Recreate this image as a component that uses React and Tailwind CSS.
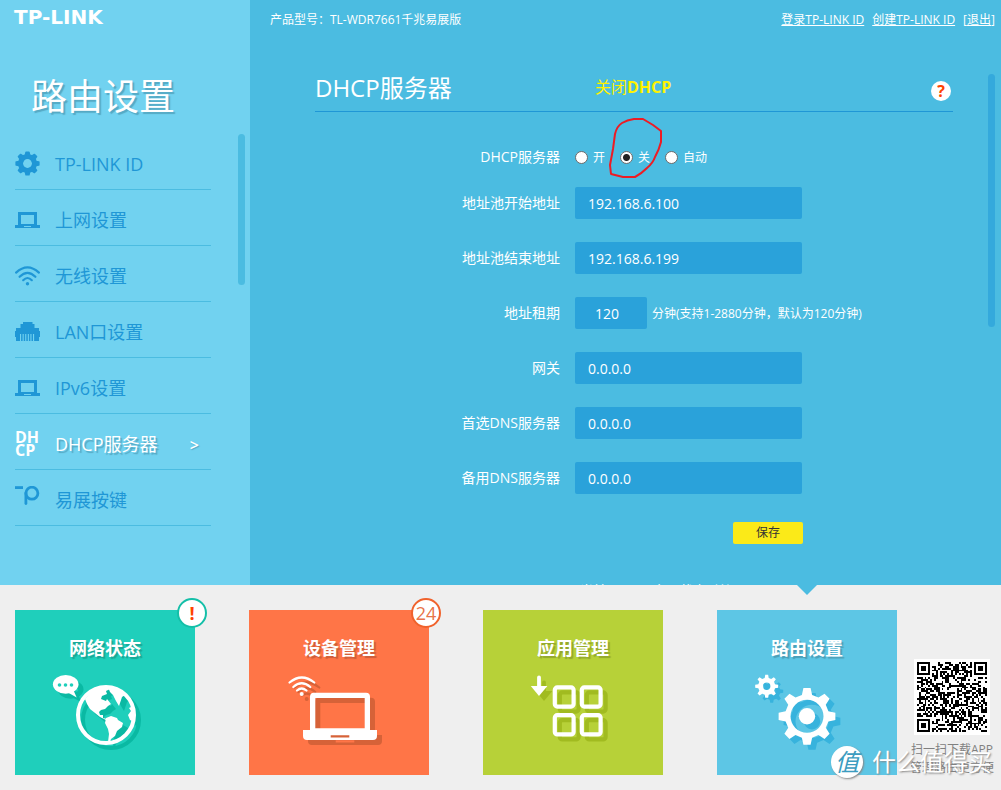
import { useState } from "react";

// outline of a cog with square-ish teeth
const gearPath = (cx, cy, outer, root, teeth = 8) => {
    const step = (Math.PI * 2) / teeth;
    const pts = [];
    for (let i = 0; i < teeth; i++) {
        const a = i * step - Math.PI / 2;
        [[-0.3, root], [-0.16, outer], [0.16, outer], [0.3, root]].forEach(([k, r]) => {
            pts.push(`${(cx + r * Math.cos(a + k * step)).toFixed(2)} ${(cy + r * Math.sin(a + k * step)).toFixed(2)}`);
        });
    }
    return `M${pts.join("L")}Z`;
};

const circlePath = (cx, cy, r) =>
    `M${cx - r} ${cy}a${r} ${r} 0 1 0 ${2 * r} 0a${r} ${r} 0 1 0 ${-2 * r} 0Z`;

const GearIcon = () => (
    <svg viewBox="0 0 25 25" className="w-[25px] h-[25px]" fill="currentColor">
        <path
            d={gearPath(12.5, 12.5, 11.4, 8.8) + circlePath(12.5, 12.5, 4.5)}
            fillRule="evenodd"
            stroke="currentColor"
            strokeWidth="1.6"
            strokeLinejoin="round"
        />
        <circle cx="12.5" cy="12.5" r="4.4" fill="#71d2f0" />
    </svg>
);

const LaptopIcon = () => (
    <svg viewBox="0 0 25 16" className="w-[25px] h-[16px]" fill="currentColor">
        <path fillRule="evenodd" d="M3 0H22V13H3ZM6 3H19V12H6Z" />
        <path fillRule="evenodd" d="M0 13H25V16H0ZM9 14H16V15H9Z" />
    </svg>
);

const WifiIcon = () => (
    <svg viewBox="0 0 25 20" className="w-[25px] h-[20px]" fill="none" stroke="currentColor" strokeWidth="2.2" strokeLinecap="round">
        <path d="M1.1 6.6Q12.5 -3.8 23.9 6.6" />
        <path d="M4.6 10.8Q12.5 3 20.4 10.8" />
        <path d="M8.2 14.2Q12.5 9.8 16.8 14.2" />
        <circle cx="12.5" cy="17.8" r="1.7" fill="currentColor" stroke="none" />
    </svg>
);

const LanIcon = () => (
    <svg viewBox="0 0 25 19" className="w-[25px] h-[19px]">
        <path fill="currentColor" d="M8 0H17.5V2H19.5V6H24V9H25V15H24V19H1V15H0V9H1V6H5.5V2H8Z" />
        {[5, 7.6, 10.2, 12.8, 15.4, 18].map((x) => (
            <rect key={x} x={x} y="12" width="1.1" height="7" fill="#71d2f0" />
        ))}
    </svg>
);

const DhcpIcon = () => (
    <span className="flex flex-col w-[25px] text-base leading-[13px] font-bold" aria-hidden="true">
        <span>DH</span>
        <span>CP</span>
    </span>
);

const KeyIcon = () => (
    <svg viewBox="0 0 25 27" className="w-[25px] h-[27px]" fill="none" stroke="currentColor" strokeWidth="2.8" strokeLinecap="round">
        <path d="M0 1.6H8" strokeLinecap="butt" />
        <path d="M10.9 17.5V7" />
        <circle cx="16.9" cy="7.2" r="6" />
    </svg>
);

// white drawing with its flat shadow behind it
const Shadowed = ({ color, children }) => (
    <svg viewBox="0 0 180 90" className="w-[180px] h-[90px] mt-2">
        <g transform="translate(5 5)" color={color}>{children}</g>
        <g color="#ffffff">{children}</g>
    </svg>
);

const GlobeArt = () => (
    <Shadowed color="#0ab9a3">
        <g fill="currentColor">
            <ellipse cx="50.7" cy="14.3" rx="12.8" ry="9.4" />
            <path d="M52 22L61.7 27.4L57.5 18Z" />
            <circle cx="91" cy="45" r="28" fill="none" stroke="currentColor" strokeWidth="4" />
            <path d="M70 29L76 22L84 18L92 17L95 19L91 21L92 24L87 26L86 29L91 31L92 29L96 34L93 36L90 39L86 40L84 42L85 45L88 45L88 48L92 49L91 50L85 47L80 43L75 39L72 34Z" />
            <path d="M93 17L104 19L110 25L107 27L104 36L101 31L98 25L95 22Z" />
            <path d="M91 48L96 46L102 48L103 50L108 53L107 57L102 61L100 66L96 69L95 72L93 72L94 64L93 59L90 53Z" />
            <path d="M118 36L114 38L116 41L113 45L115 50L119 52Z" />
        </g>
        <g fill="#1fcfbb">
            <circle cx="44.5" cy="15" r="1.8" />
            <circle cx="50.5" cy="15" r="1.8" />
            <circle cx="56.5" cy="15" r="1.8" />
        </g>
    </Shadowed>
);

const DevicesArt = () => (
    <Shadowed color="#d66238">
        <g fill="currentColor">
            <path fillRule="evenodd" d="M65 22.7H117Q121 22.7 121 26.7V60H61V26.7Q61 22.7 65 22.7ZM66.3 28V58.3H115.7V28Z" />
            <path fillRule="evenodd" d="M54 60H128V66Q128 70 124 70H58Q54 70 54 66ZM81.7 65.2V67.4H100.3V65.2Z" />
            <circle cx="52.7" cy="24" r="2" />
        </g>
        <g fill="none" stroke="currentColor" strokeWidth="2.2" strokeLinecap="round">
            <path d="M40.5 12.5Q52.7 2.5 65.3 12.5" />
            <path d="M44.3 17Q52.7 9.5 61.3 17" />
            <path d="M48 20.5Q52.7 16.5 57.5 20.5" />
        </g>
    </Shadowed>
);

const AppsArt = () => (
    <Shadowed color="#a1bb20">
        <g fill="none" stroke="currentColor" strokeWidth="4.2">
            <rect x="71.8" y="17.4" width="18.8" height="19.2" rx="2.5" />
            <rect x="98.8" y="17.4" width="18.8" height="19.2" rx="2.5" />
            <rect x="71.8" y="45.2" width="18.8" height="19.2" rx="2.5" />
            <rect x="98.8" y="45.2" width="18.8" height="19.2" rx="2.5" />
            <path d="M56 7.4V18" strokeLinecap="round" strokeWidth="3.8" />
        </g>
        <path fill="currentColor" d="M47.8 16H64.4L56 26Z" />
    </Shadowed>
);

const GearsArt = () => (
    <Shadowed color="#37b3dd">
        <g fill="currentColor" fillRule="evenodd">
            <path d={gearPath(49.7, 16.3, 11.6, 8.6) + circlePath(49.7, 16.3, 3.7)} />
            <path d={gearPath(90, 46.3, 28.6, 22) + circlePath(90, 46.3, 16.5)} />
            <circle cx="90" cy="46.3" r="8.2" />
        </g>
    </Shadowed>
);

// 37 x 37 code: three finders, one alignment mark, filler modules
const QrCode = () => {
    const n = 37;
    const finder = (x, y, fx, fy) => {
        const d = Math.max(Math.abs(x - fx), Math.abs(y - fy));
        return d > 4 ? null : d !== 2 && d !== 4;
    };
    let seed = 7661;
    let d = "";
    for (let y = 0; y < n; y++) {
        for (let x = 0; x < n; x++) {
            seed = (seed * 1103515245 + 12345) % 2147483648;
            let on = (seed >> 12) % 100 < 52;
            if (x === 6 || y === 6) on = (x + y) % 2 === 0;
            const a = Math.max(Math.abs(x - 30), Math.abs(y - 30));
            if (a <= 2) on = a !== 1;
            [[3, 3], [33, 3], [3, 33]].forEach(([fx, fy]) => {
                const f = finder(x, y, fx, fy);
                if (f !== null) on = f;
            });
            if (on) d += `M${x} ${y}h1v1h-1z`;
        }
    }
    return (
        <svg viewBox="0 0 37 37" className="w-[70px] h-[70px]" shapeRendering="crispEdges" role="img">
            <path d={d} fill="#000" />
        </svg>
    );
};

const menu = [
    { name: "TP-LINK ID", icon: <GearIcon /> },
    { name: "上网设置", icon: <LaptopIcon /> },
    { name: "无线设置", icon: <WifiIcon /> },
    { name: "LAN口设置", icon: <LanIcon /> },
    { name: "IPv6设置", icon: <LaptopIcon /> },
    { name: "DHCP服务器", icon: <DhcpIcon />, active: true },
    { name: "易展按键", icon: <KeyIcon /> },
];

const SideBar = () => {
    return (
        <aside className="flex flex-col w-[250px] shrink-0 bg-[#71d2f0]">
            <div className="h-[134px] shrink-0">
                <a href="#" className="block pl-[14px] pt-[5px] text-white font-bold text-xl leading-6 font-['DejaVu_Sans']">
                    TP-LINK
                </a>
                <h1 className="pl-[31px] pt-[38px] text-[36px] leading-[60px] text-white [text-shadow:2px_2px_1px_#55a9c4]">路由设置</h1>
            </div>
            <div className="flex justify-between pl-[15px] pr-[5px]">
                <nav className="w-[196px]">
                    {menu.map((m) => (
                        <a
                            key={m.name}
                            href="#"
                            className={
                                m.active
                                    ? "flex items-center gap-[15px] h-14 pt-1 border-b border-[#4bbce1] text-white"
                                    : "flex items-center gap-[15px] h-14 pt-1 border-b border-[#4bbce1] text-[#1f97d6]"
                            }
                        >
                            {m.icon}
                            <span className={m.active ? "pt-0.5 text-[18px] [text-shadow:2px_2px_1px_#55a9c4]" : "pt-0.5 text-[18px]"}>{m.name}</span>
                            {m.active && (
                                <span className="ml-auto pr-3 pt-0.5 text-base font-semibold [text-shadow:1px_1px_1px_#55a9c4]">&gt;</span>
                            )}
                        </a>
                    ))}
                </nav>
                <div className="w-[7px] h-[151px] rounded-full bg-[#4bbce1]" />
            </div>
        </aside>
    );
};

const Field = ({ id, label, value, onChange, short, children }) => (
    <div className="flex items-center gap-[15px]">
        <label htmlFor={id} className="w-[245px] text-right text-sm">{label}</label>
        <div className="flex items-center gap-[5px]">
            <input
                id={id}
                type="text"
                value={value}
                onChange={(e) => onChange(e.target.value)}
                className={
                    short
                        ? "w-[72px] h-8 pl-5 rounded-xs bg-[#2aa2da] text-sm text-white outline-none"
                        : "w-[227px] h-8 pl-[13px] rounded-xs bg-[#2aa2da] text-sm text-white outline-none"
                }
            />
            {children}
        </div>
    </div>
);

const DhcpForm = () => {
    const [mode, setMode] = useState("关");
    const [form, setForm] = useState({
        start: "192.168.6.100",
        end: "192.168.6.199",
        lease: "120",
        gateway: "0.0.0.0",
        dns1: "0.0.0.0",
        dns2: "0.0.0.0",
    });
    const set = (k) => (v) => setForm({ ...form, [k]: v });

    return (
        <form className="pt-[29px]" onSubmit={(e) => e.preventDefault()}>
            <div className="flex items-center gap-[15px] h-8 mb-[14px]">
                <span id="mode" className="w-[245px] text-right text-sm">DHCP服务器</span>
                <div role="radiogroup" aria-labelledby="mode" className="relative flex items-center gap-[15px]">
                    {["开", "关", "自动"].map((m) => (
                        <label key={m} className="flex items-center gap-[5px] text-xs">
                            <input
                                type="radio"
                                name="mode"
                                checked={mode === m}
                                onChange={() => setMode(m)}
                                className="appearance-none w-[13px] h-[13px] rounded-full border border-[#6b6b6b] bg-white checked:bg-[radial-gradient(#222_3px,#fff_4px)]"
                            />
                            <span className="pt-0.5">{m}</span>
                        </label>
                    ))}
                    {/* red pen mark around the chosen option */}
                    <svg
                        viewBox="608 118 56 62"
                        className="absolute left-[33px] -top-[30px] w-[56px] h-[62px] pointer-events-none"
                        fill="none"
                        stroke="#ed1c24"
                        strokeWidth="2"
                        strokeLinejoin="round"
                    >
                        <path d="M611 174L610 165L613 149L615 134Q617 126 622 123Q627 120 634 119H643L653 125L661 131V142Q659 150 655 157Q653 163 647 168Q641 174 635 177H623L611 174Z" />
                    </svg>
                </div>
            </div>
            <div className="flex flex-col gap-[23px]">
                <Field id="start" label="地址池开始地址" value={form.start} onChange={set("start")} />
                <Field id="end" label="地址池结束地址" value={form.end} onChange={set("end")} />
                <Field id="lease" label="地址租期" value={form.lease} onChange={set("lease")} short>
                    <span className="pt-0.5 text-xs whitespace-nowrap">分钟(支持1-2880分钟，默认为120分钟)</span>
                </Field>
                <Field id="gateway" label="网关" value={form.gateway} onChange={set("gateway")} />
                <Field id="dns1" label="首选DNS服务器" value={form.dns1} onChange={set("dns1")} />
                <Field id="dns2" label="备用DNS服务器" value={form.dns2} onChange={set("dns2")} />
            </div>
            <div className="flex justify-end w-[488px] pt-7">
                <button type="submit" className="w-[70px] h-[22px] rounded-xs bg-[#fbea18] text-xs leading-[22px] text-[#333]">保存</button>
            </div>
            <p className="pl-[265px] pt-9 text-[13px] leading-5">当前DHCP服务器状态: 关闭</p>
        </form>
    );
};

const Tile = ({ name, className, badge, badgeClass, active, children }) => (
    <a href="#" className={`relative block w-[180px] h-[165px] shrink-0 pt-6 ${className}`}>
        {active && (
            <span className="absolute left-20 -top-[25px] border-x-[10px] border-t-[10px] border-x-transparent border-t-[#4bbce1]" />
        )}
        <span className="block text-center text-[18px] leading-7 font-bold text-white [text-shadow:2px_2px_1px_rgba(0,0,0,0.2)]">{name}</span>
        {children}
        {badge && (
            <span className={`absolute -right-3 -top-3 flex items-center justify-center w-[30px] h-[30px] rounded-full border-2 bg-white text-[18px] ${badgeClass}`}>
                {badge}
            </span>
        )}
    </a>
);

const App = () => {
    return (
        <div className="flex flex-col h-screen overflow-hidden font-['Open_Sans','Noto_Sans_CJK_SC',sans-serif] text-white">
            <div className="flex flex-1 min-h-0 overflow-hidden">
                <SideBar />
                <main className="flex flex-col flex-1 min-w-0 bg-[#4bbce1]">
                    <header className="flex items-center justify-between h-10 shrink-0 pl-5 pr-[6px] text-xs">
                        <p>产品型号：TL-WDR7661千兆易展版</p>
                        <div className="flex gap-2">
                            <a href="#" className="underline">登录TP-LINK ID</a>
                            <a href="#" className="underline">创建TP-LINK ID</a>
                            <a href="#">[<span className="underline">退出</span>]</a>
                        </div>
                    </header>
                    <div className="flex">
                        <section className="flex-1 pl-[65px] pr-[35px]">
                            <div className="flex items-center h-[72px] pt-6 border-b border-[#1f97d6]">
                                <h2 className="w-[280px] text-2xl">DHCP服务器</h2>
                                <strong className="pb-0.5 text-base font-normal text-[#fff200]">关闭<b>DHCP</b></strong>
                                <button type="button" className="ml-auto mr-0.5 mt-1.5 w-5 h-5 rounded-full bg-white text-[#ff4200] text-base leading-5 font-bold">?</button>
                            </div>
                            <DhcpForm />
                        </section>
                        <div className="w-[7px] h-[253px] mt-[34px] mr-[6px] rounded-full bg-[#34a9dc]" />
                    </div>
                </main>
            </div>
            <footer className="relative flex shrink-0 pt-[25px] pb-[13px] pl-[15px] bg-[#efefef]">
                <div className="flex gap-[54px]">
                    <Tile name="网络状态" className="bg-[#1fcfbb]" badge="!" badgeClass="border-[#14bfa8] text-[#ff4200] font-bold">
                        <GlobeArt />
                    </Tile>
                    <Tile name="设备管理" className="bg-[#ff7547]" badge="24" badgeClass="border-[#f0622c] text-[#e8734a]">
                        <DevicesArt />
                    </Tile>
                    <Tile name="应用管理" className="bg-[#b7d138]">
                        <AppsArt />
                    </Tile>
                    <Tile name="路由设置" className="bg-[#5dc6e5]" active>
                        <GearsArt />
                    </Tile>
                </div>
                <div className="flex flex-col items-center flex-1 pl-1.5 pt-[49px] text-xs text-[#808080]">
                    <div className="p-[3px] bg-white">
                        <QrCode />
                    </div>
                    <p className="pt-1.5 leading-[18px] text-center whitespace-nowrap">
                        扫一扫下载APP
                        <br />
                        管理路由更方便
                    </p>
                </div>
                {/* site mark laid over the corner */}
                <div className="absolute right-[9px] bottom-[10px] flex items-center gap-[9px] pointer-events-none">
                    <span className="flex items-center justify-center w-8 h-8 rounded-full bg-white text-[24px] leading-8 italic text-[#3c9cc0] shadow-[1px_1px_2px_#888]">值</span>
                    <span className="text-[24px] leading-9 text-white [text-shadow:1px_1px_2px_#888]">什么值得买</span>
                </div>
            </footer>
        </div>
    );
};

export default App;
